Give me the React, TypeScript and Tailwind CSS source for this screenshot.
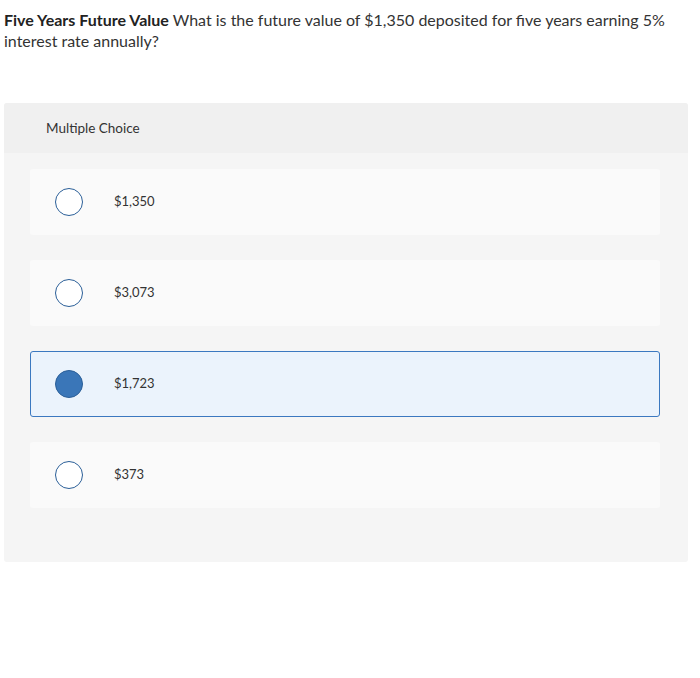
import { useState } from 'react';

const choices = ['$1,350', '$3,073', '$1,723', '$373'];

export default function App() {
  const [selected, setSelected] = useState(2);

  return (
    <div className="w-[700px] h-[678px] bg-white text-[#333] font-['Lato','Liberation_Sans',sans-serif]">
      <p className="pl-[4px] pr-[20px] pt-[9px] text-[16px] leading-[21px] text-[#333]">
        <span className="font-bold text-[#222]">Five Years Future Value</span> What is the future value of $1,350
        deposited for five years earning 5% interest rate annually?
      </p>

      <div className="ml-[4px] mt-[52px] w-[684px] rounded-[3px] bg-[#f5f5f5] overflow-hidden">
        <div className="h-[50px] bg-[#f0f0f0] pl-[42px] flex items-center text-[13.5px] text-[#333]">
          Multiple Choice
        </div>
        <div className="px-[26px] pt-[16px] pb-[54px] flex flex-col gap-[25px]">
          {choices.map((c, i) => {
            const active = i === selected;
            return (
              <button
                key={c}
                onClick={() => setSelected(i)}
                className={
                  active
                    ? 'h-[66px] w-[630px] rounded-[3px] border border-[#3b78c0] bg-[#ebf3fc] flex items-center text-left'
                    : 'h-[66px] w-[630px] rounded-[3px] border border-transparent bg-[#fafafa] flex items-center text-left'
                }
              >
                <span
                  className={
                    active
                      ? 'ml-[24px] w-[28px] h-[28px] rounded-full border-[1.5px] border-[#2b5f98] bg-[#3a76b8]'
                      : 'ml-[24px] w-[28px] h-[28px] rounded-full border-[1.5px] border-[#2b5f98] bg-white'
                  }
                />
                <span className="ml-[31px] text-[13px] text-[#333]">{c}</span>
              </button>
            );
          })}
        </div>
      </div>
    </div>
  );
}
